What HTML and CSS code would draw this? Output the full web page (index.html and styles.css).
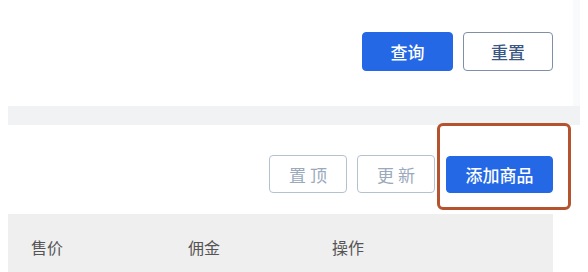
FILE: index.html
```html
<!DOCTYPE html>
<html lang="zh-CN">
<head>
<meta charset="utf-8">
<title>商品管理</title>
<link rel="stylesheet" href="styles.css">
</head>
<body>
<div class="page">
  <div class="top-row">
    <div class="card-top">
      <button class="btn btn-primary btn-lg">查询</button>
      <button class="btn btn-outline btn-lg">重置</button>
    </div>
  </div>
  <div class="band"></div>
  <div class="card-bottom">
    <div class="toolbar">
      <button class="btn btn-light">置 顶</button>
      <button class="btn btn-light">更 新</button>
      <button class="btn btn-primary btn-add">添加商品</button>
      <div class="highlight"></div>
    </div>
    <div class="table-head">
      <div class="col col-price">售价</div>
      <div class="col col-comm">佣金</div>
      <div class="col col-op">操作</div>
    </div>
  </div>
</div>
</body>
</html>
```
FILE: styles.css
```css
* { box-sizing: border-box; }
html, body { margin: 0; padding: 0; }
body {
  width: 588px;
  height: 272px;
  overflow: hidden;
  background: #ffffff;
  font-family: "Noto Sans CJK SC", "Noto Sans", sans-serif;
}
.page {
  margin-left: 8px;
  width: 572px;
  background: #f1f2f4;
}
.top-row {
  background: #f9fafb;
}
.card-top {
  width: 565px;
  height: 106px;
  background: #ffffff;
  display: flex;
  justify-content: flex-end;
  align-items: flex-start;
  padding: 32px 20px 0 0;
  gap: 10px;
}
.band { height: 19px; }
.card-bottom {
  background: #ffffff;
  height: 147px;
  padding-top: 30px;
}
.toolbar {
  position: relative;
  display: flex;
  justify-content: flex-end;
  align-items: center;
  padding-right: 27px;
  height: 38px;
}
.btn {
  font-family: "Noto Sans CJK SC", "Noto Sans", sans-serif;
  font-size: 17px;
  border-radius: 4px;
  padding: 0;
  display: flex;
  align-items: center;
  justify-content: center;
  line-height: 1;
  cursor: pointer;
}
.btn-lg { width: 91px; height: 39px; }
.btn-lg + .btn-lg { width: 90px; }
.btn-primary {
  background: #2468e6;
  border: 1px solid #2468e6;
  color: #ffffff;
  font-weight: 500;
}
.btn-outline {
  background: #ffffff;
  border: 1.5px solid #7f8fa6;
  color: #3b5785;
  font-weight: 500;
}
.btn-light {
  width: 78px;
  height: 38px;
  background: #ffffff;
  border: 1px solid #b3c1d1;
  color: #9aa9bc;
  margin-right: 10px;
}
.btn-add {
  width: 107px;
  height: 37px;
  margin-left: 1px;
  margin-top: 1px;
}
.highlight {
  position: absolute;
  left: 429px;
  top: -32px;
  width: 134px;
  height: 87px;
  border: 3px solid #b5532f;
  border-radius: 6px;
}
.table-head {
  margin-top: 21px;
  width: 545px;
  height: 66px;
  background: #efefef;
  display: flex;
  align-items: center;
  font-size: 16px;
  color: #555555;
}
.col { line-height: 1; }
.col-price { padding-left: 23px; width: 180px; }
.col-comm { width: 144px; }
```
